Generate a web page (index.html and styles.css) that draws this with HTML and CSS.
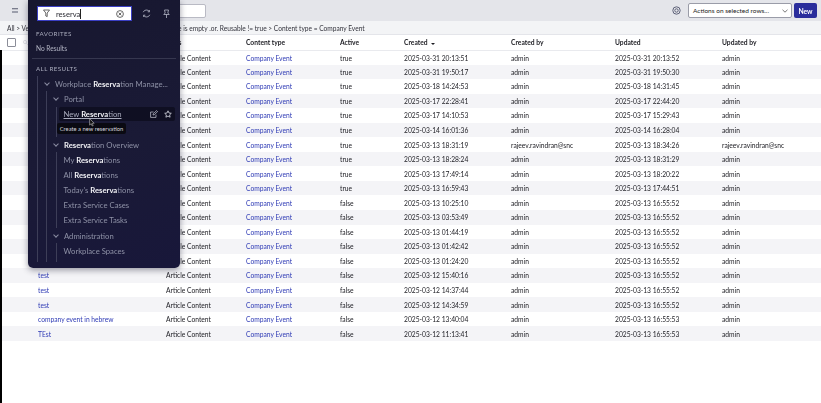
FILE: index.html
```html
<!DOCTYPE html>
<html lang="en">
<head>
    <meta charset="UTF-8">
    <meta name="viewport" content="width=device-width, initial-scale=1.0">
    <title>Content - List</title>
    <link rel="stylesheet" href="styles.css">
</head>
<body>
    <div class="page">
        <header class="list-bar">
            <svg class="menu-icon" width="6" height="5" viewBox="0 0 6 5"><path d="M0 .7h6M0 4h6" stroke="#555a6e" stroke-width="1.1"/></svg>
            <div class="list-search"></div>
            <svg class="gear-icon" width="9" height="9" viewBox="0 0 9 9" fill="none" stroke="#5d6178"><circle cx="4.5" cy="4.5" r="3.7"/><circle cx="4.5" cy="4.5" r="1.7"/></svg>
            <div class="actions-select">
                <span>Actions on selected rows...</span>
                <svg width="6" height="4" viewBox="0 0 6 4" fill="none" stroke="#555"><path d="M.5.8 3 3.2 5.5.8" stroke-width=".8"/></svg>
            </div>
            <button class="new-btn">New</button>
        </header>

        <div class="breadcrumb">
            <span class="crumb-start">All &gt; Ve</span>
            <span>e is empty .or. Reusable != true &gt; Content type = Company Event</span>
        </div>

        <table class="list-table">
            <colgroup>
                <col class="c-check"><col class="c-title"><col class="c-class"><col class="c-type"><col class="c-active"><col class="c-created"><col class="c-by"><col class="c-updated"><col class="c-upby">
            </colgroup>
            <thead>
                <tr>
                    <th>
                        <div class="check-cell">
                            <span class="checkbox"></span>
                            <svg width="5" height="5" viewBox="0 0 5 5" fill="none" stroke="#d5d6dc" stroke-width=".7"><circle cx="2" cy="2" r="1.6"/><path d="M3.2 3.2 4.8 4.8"/></svg>
                        </div>
                    </th>
                    <th></th>
                    <th>Class</th>
                    <th>Content type</th>
                    <th>Active</th>
                    <th>Created <span class="sort-arrow"></span></th>
                    <th>Created by</th>
                    <th>Updated</th>
                    <th>Updated by</th>
                </tr>
            </thead>
            <tbody>
                <tr><td></td><td></td><td>Article Content</td><td><a href="#">Company Event</a></td><td>true</td><td>2025-03-31 20:13:51</td><td>admin</td><td>2025-03-31 20:13:52</td><td>admin</td></tr>
                <tr><td></td><td></td><td>Article Content</td><td><a href="#">Company Event</a></td><td>true</td><td>2025-03-31 19:50:17</td><td>admin</td><td>2025-03-31 19:50:30</td><td>admin</td></tr>
                <tr><td></td><td></td><td>Article Content</td><td><a href="#">Company Event</a></td><td>true</td><td>2025-03-18 14:24:53</td><td>admin</td><td>2025-03-18 14:31:45</td><td>admin</td></tr>
                <tr><td></td><td></td><td>Article Content</td><td><a href="#">Company Event</a></td><td>true</td><td>2025-03-17 22:28:41</td><td>admin</td><td>2025-03-17 22:44:20</td><td>admin</td></tr>
                <tr><td></td><td></td><td>Article Content</td><td><a href="#">Company Event</a></td><td>true</td><td>2025-03-17 14:10:53</td><td>admin</td><td>2025-03-17 15:29:43</td><td>admin</td></tr>
                <tr><td></td><td></td><td>Article Content</td><td><a href="#">Company Event</a></td><td>true</td><td>2025-03-14 16:01:36</td><td>admin</td><td>2025-03-14 16:28:04</td><td>admin</td></tr>
                <tr><td></td><td></td><td>Article Content</td><td><a href="#">Company Event</a></td><td>true</td><td>2025-03-13 18:31:19</td><td>rajeev.ravindran@snc</td><td>2025-03-13 18:34:26</td><td>rajeev.ravindran@snc</td></tr>
                <tr><td></td><td></td><td>Article Content</td><td><a href="#">Company Event</a></td><td>true</td><td>2025-03-13 18:28:24</td><td>admin</td><td>2025-03-13 18:31:29</td><td>admin</td></tr>
                <tr><td></td><td></td><td>Article Content</td><td><a href="#">Company Event</a></td><td>true</td><td>2025-03-13 17:49:14</td><td>admin</td><td>2025-03-13 18:20:22</td><td>admin</td></tr>
                <tr><td></td><td></td><td>Article Content</td><td><a href="#">Company Event</a></td><td>true</td><td>2025-03-13 16:59:43</td><td>admin</td><td>2025-03-13 17:44:51</td><td>admin</td></tr>
                <tr><td></td><td></td><td>Article Content</td><td><a href="#">Company Event</a></td><td>false</td><td>2025-03-13 10:25:10</td><td>admin</td><td>2025-03-13 16:55:52</td><td>admin</td></tr>
                <tr><td></td><td></td><td>Article Content</td><td><a href="#">Company Event</a></td><td>false</td><td>2025-03-13 03:53:49</td><td>admin</td><td>2025-03-13 16:55:52</td><td>admin</td></tr>
                <tr><td></td><td></td><td>Article Content</td><td><a href="#">Company Event</a></td><td>false</td><td>2025-03-13 01:44:19</td><td>admin</td><td>2025-03-13 16:55:52</td><td>admin</td></tr>
                <tr><td></td><td></td><td>Article Content</td><td><a href="#">Company Event</a></td><td>false</td><td>2025-03-13 01:42:42</td><td>admin</td><td>2025-03-13 16:55:52</td><td>admin</td></tr>
                <tr><td></td><td></td><td>Article Content</td><td><a href="#">Company Event</a></td><td>false</td><td>2025-03-13 01:24:20</td><td>admin</td><td>2025-03-13 16:55:52</td><td>admin</td></tr>
                <tr><td></td><td><a href="#">test</a></td><td>Article Content</td><td><a href="#">Company Event</a></td><td>false</td><td>2025-03-12 15:40:16</td><td>admin</td><td>2025-03-13 16:55:52</td><td>admin</td></tr>
                <tr><td></td><td><a href="#">test</a></td><td>Article Content</td><td><a href="#">Company Event</a></td><td>false</td><td>2025-03-12 14:37:44</td><td>admin</td><td>2025-03-13 16:55:52</td><td>admin</td></tr>
                <tr><td></td><td><a href="#">test</a></td><td>Article Content</td><td><a href="#">Company Event</a></td><td>false</td><td>2025-03-12 14:34:59</td><td>admin</td><td>2025-03-13 16:55:52</td><td>admin</td></tr>
                <tr><td></td><td><a href="#">company event in hebrew</a></td><td>Article Content</td><td><a href="#">Company Event</a></td><td>false</td><td>2025-03-12 13:40:04</td><td>admin</td><td>2025-03-13 16:55:53</td><td>admin</td></tr>
                <tr><td></td><td><a href="#">TEst</a></td><td>Article Content</td><td><a href="#">Company Event</a></td><td>false</td><td>2025-03-12 11:13:41</td><td>admin</td><td>2025-03-13 16:55:53</td><td>admin</td></tr>
            </tbody>
        </table>

        <div class="edge-strip"></div>

        <!-- all menu, open over the list -->
        <aside class="nav-panel">
            <div class="nav-search-row">
                <div class="nav-search">
                    <svg width="7" height="9" viewBox="0 0 7 9" fill="none" stroke="#444"><path d="M.5 1h6L4.2 4v3.6L2.8 7V4z" stroke-width=".8"/></svg>
                    <span class="typed">reserva</span>
                    <svg class="clear-icon" width="8" height="8" viewBox="0 0 8 8" fill="none" stroke="#444" stroke-width=".8"><circle cx="4" cy="4" r="3.4"/><path d="M2.6 2.6l2.8 2.8M5.4 2.6L2.6 5.4"/></svg>
                </div>
                <svg class="nav-tool" width="9" height="9" viewBox="0 0 9 9" fill="none" stroke="#b5b7c6" stroke-width=".8"><path d="M1.2 3.2A3.5 3.5 0 0 1 7.4 2.6M7.8 5.8A3.5 3.5 0 0 1 1.6 6.4"/><path d="M7.4 1v1.8H5.7M1.6 8V6.2h1.7"/></svg>
                <svg class="nav-tool" width="7" height="10" viewBox="0 0 7 10" fill="none" stroke="#b5b7c6" stroke-width=".8"><path d="M1.5 1h4L4.8 4l1.4 1.5H.8L2.2 4zM3.5 5.5V9"/></svg>
            </div>

            <h4 class="nav-heading">FAVORITES</h4>
            <p class="no-results">No Results</p>
            <hr class="nav-divider">
            <h4 class="nav-heading all-heading">ALL RESULTS</h4>

            <div class="tree">
                <div class="tree-head"><span class="chev"></span><span>Workplace <b>Reserva</b>tion Manage...</span></div>
                <div class="tree-level">
                    <div class="tree-head"><span class="chev"></span><span>Portal</span></div>
                    <div class="tree-level leafs short">
                        <div class="leaf active">
                            <a href="#"><span>New <b>Reserva</b>tion</span></a>
                            <svg width="8" height="8" viewBox="0 0 8 8" fill="none" stroke="#c8cad6" stroke-width=".7"><path d="M6 4.6V7.4H.6V2H3.6M3 5l.3-1.3L6.6.6l1 1L4.3 4.7z"/></svg>
                            <svg width="8" height="8" viewBox="0 0 8 8" fill="none" stroke="#d8dae4" stroke-width=".8"><path d="M4 .8l1 2.2 2.3.3-1.7 1.6.5 2.3L4 6.1 1.9 7.2l.5-2.3L.7 3.3 3 3z"/></svg>
                        </div>
                    </div>
                    <div class="tree-head"><span class="chev"></span><span><b>Reserva</b>tion Overview</span></div>
                    <div class="tree-level leafs">
                        <div class="leaf"><span>My <b>Reserva</b>tions</span></div>
                        <div class="leaf"><span>All <b>Reserva</b>tions</span></div>
                        <div class="leaf"><span>Today's <b>Reserva</b>tions</span></div>
                        <div class="leaf"><span>Extra Service Cases</span></div>
                        <div class="leaf"><span>Extra Service Tasks</span></div>
                    </div>
                    <div class="tree-head"><span class="chev"></span><span>Administration</span></div>
                    <div class="tree-level leafs">
                        <div class="leaf"><span>Workplace Spaces</span></div>
                        <div class="leaf"><span>Workplace Types</span></div>
                    </div>
                </div>
            </div>
        </aside>

        <div class="tooltip">Create a new reservation</div>
        <svg class="cursor" width="6" height="9" viewBox="0 0 6 9"><path d="M.6.5v6.6l1.6-1.4 1 2.3 1-.4-1-2.3h2z" fill="#111" stroke="#ddd" stroke-width=".5"/></svg>
    </div>
</body>
</html>
```
FILE: styles.css
```css
* {
    margin: 0;
    padding: 0;
    box-sizing: border-box;
}

body {
    background-color: #fff;
    color: #1c1c22;
    font-family: Lato, "Open Sans", sans-serif;
    font-size: 6.7px;
    overflow: hidden;
}

a {
    color: #2f3bb5;
    text-decoration: none;
}

.page {
    position: relative;
    width: 821px;
    height: 403px;
    overflow: hidden;
    filter: blur(0.3px); /* reference is a soft video frame */
}

/* top bar */
.list-bar {
    height: 21px;
    background-color: #e4e5ea;
    display: flex;
    align-items: center;
    padding: 0 4px 0 12px;
}

.list-search {
    width: 120px;
    height: 14px;
    margin-left: 68px;
    background-color: #fff;
    border: 1px solid #b9bac4;
    border-radius: 2px;
}

.gear-icon {
    margin-left: auto;
    margin-right: 7px;
}

.actions-select {
    width: 104px;
    height: 15px;
    background-color: #fff;
    border: 1px solid #9a9ca8;
    border-radius: 2px;
    display: flex;
    align-items: center;
    justify-content: space-between;
    padding: 0 3px 0 4px;
    font-size: 6.5px;
    margin-right: 2px;
}

.new-btn {
    width: 23px;
    height: 15px;
    border: none;
    border-radius: 2px;
    background-color: #2a2d9c;
    color: #fff;
    font: bold 6.8px Lato, sans-serif;
}

/* filter breadcrumb */
.breadcrumb {
    height: 14px;
    background-color: #f3f4f6;
    border-bottom: 1px solid #e4e5ea;
    display: flex;
    align-items: center;
    padding: 1px 0 0 7px;
    color: #33333c;
    font-size: 6.6px;
}

.crumb-start {
    width: 171px;
}

/* list */
.list-table {
    width: 821px;
    table-layout: fixed;
    border-collapse: collapse;
}

.c-check { width: 38px; }
.c-title { width: 128px; }
.c-class { width: 80px; }
.c-type { width: 94px; }
.c-active { width: 64px; }
.c-created { width: 107px; }
.c-by { width: 104px; }
.c-updated { width: 107px; }
.c-upby { width: 99px; }

.list-table th {
    height: 15px;
    text-align: left;
    font-weight: bold;
    border-bottom: 1px solid #e9eaee;
    white-space: nowrap;
}

.list-table td {
    height: 14.55px;
    line-height: 14px;
    white-space: nowrap;
    overflow: hidden;
}

.list-table tbody tr:nth-child(even) {
    background-color: #f4f4f7;
}

.check-cell {
    display: flex;
    align-items: center;
    gap: 7px;
    padding-left: 7px;
}

.checkbox {
    width: 8.5px;
    height: 8.5px;
    background-color: #fff;
    border: 1px solid #8b8d98;
    border-radius: 1px;
}

.sort-arrow {
    display: inline-block;
    margin-left: 2px;
    vertical-align: middle;
    border-left: 2px solid transparent;
    border-right: 2px solid transparent;
    border-top: 2.5px solid #1c1c22;
}

.edge-strip {
    position: absolute;
    left: 0;
    top: 50px;
    bottom: 0;
    width: 2px;
    background-color: #000;
}

/* all menu */
.nav-panel {
    position: absolute;
    left: 28px;
    top: 0;
    width: 152px;
    height: 268px;
    overflow: hidden;
    padding-top: 6px;
    background: linear-gradient(160deg, #17172f 0%, #1a1a36 55%, #18173a 100%);
    border-radius: 0 0 5px 5px;
    box-shadow: 0 2px 6px rgba(30, 30, 50, 0.45);
    color: #8e91a6;
    font-size: 7.7px;
}

.nav-search-row {
    display: flex;
    align-items: center;
    padding-left: 9px;
}

.nav-search {
    width: 95px;
    height: 15px;
    background-color: #fff;
    border: 1px solid #3b3fc4;
    display: flex;
    align-items: center;
    padding: 0 7px 0 5px;
    color: #2a2a32;
    font-size: 7.6px;
}

.typed {
    margin-left: 6px;
    border-right: 1px solid #222;
}

.clear-icon {
    margin-left: auto;
}

.nav-tool {
    margin-left: 10px;
}

.nav-tool + .nav-tool {
    margin-left: 12px;
}

.nav-heading {
    margin: 8px 0 0 8px;
    font-size: 6.2px;
    font-weight: normal;
    letter-spacing: 0.4px;
    line-height: 9px;
    color: #a9abbc;
}

.all-heading {
    margin-top: 5px;
}

.no-results {
    margin: 6px 0 0 8px;
    font-size: 6.6px;
    line-height: 9px;
    color: #b3b5c4;
}

.nav-divider {
    margin: 5px 4px 0 4px;
    border: none;
    border-top: 1px solid #36374f;
}

/* stops at the list's scroll edge, the last item is cut off */
.tree {
    height: 186px;
    overflow: hidden;
    margin: 3px 0 0 9px;
    border-left: 1px solid #3d3e58;
    white-space: nowrap;
}

.tree b {
    color: #f2f2f6;
    font-weight: bold;
}

.tree-head {
    height: 15px;
    display: flex;
    align-items: center;
    padding-left: 7px;
}

.chev {
    width: 4px;
    height: 4px;
    margin: -2px 6px 0 0;
    border-right: 1px solid #8a8ca2;
    border-bottom: 1px solid #8a8ca2;
    transform: rotate(45deg);
}

.tree-level {
    margin-left: 8px;
    border-left: 1px solid #3d3e58;
}

.tree-level.leafs {
    margin-left: 9px;
    padding-bottom: 1px;
}

.leaf {
    height: 15px;
    display: flex;
    align-items: center;
    gap: 6px;
    padding-left: 6.5px;
}

.leaf.active {
    width: 116px;
    height: 14px;
    margin: 1px 0 0 2px;
    padding: 0 3px 0 4.5px;
    background-color: #0f0f22;
    border-radius: 2px;
}

.leaf.active a {
    color: #a9abbc;
    text-decoration: underline;
    margin-right: auto;
}

.tree-level.short {
    height: 30px;
}

.tooltip {
    position: absolute;
    left: 57px;
    top: 123px;
    width: 69px;
    height: 11px;
    background-color: #0a0a12;
    border-radius: 2px;
    color: #d5d6de;
    font-size: 5.8px;
    line-height: 11px;
    text-align: center;
    white-space: nowrap;
}

.cursor {
    position: absolute;
    left: 89px;
    top: 118px;
}
```
